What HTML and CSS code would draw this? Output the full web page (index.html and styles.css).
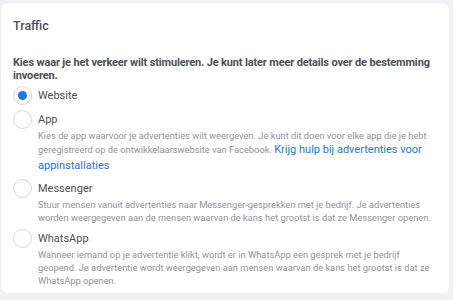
FILE: index.html
```html
<!DOCTYPE html>
<html lang="nl">
<head>
    <meta charset="UTF-8">
    <title>Traffic</title>
    <link rel="stylesheet" href="styles.css">
</head>
<body>
    <div class="card">
        <h2 class="title">Traffic</h2>
        <p class="intro">Kies waar je het verkeer wilt stimuleren. Je kunt later meer details over de bestemming invoeren.</p>
        <ul class="options">
            <li class="option">
                <span class="radio checked"></span>
                <div class="option-body">
                    <div class="option-label">Website</div>
                </div>
            </li>
            <li class="option">
                <span class="radio"></span>
                <div class="option-body">
                    <div class="option-label">App</div>
                    <p class="option-desc">Kies de app waarvoor je advertenties wilt weergeven. Je kunt dit doen voor elke app die je hebt geregistreerd op de ontwikkelaarswebsite van Facebook. <a href="#">Krijg hulp bij advertenties voor appinstallaties</a></p>
                </div>
            </li>
            <li class="option">
                <span class="radio"></span>
                <div class="option-body">
                    <div class="option-label">Messenger</div>
                    <p class="option-desc">Stuur mensen vanuit advertenties naar Messenger-gesprekken met je bedrijf. Je advertenties worden weergegeven aan de mensen waarvan de kans het grootst is dat ze Messenger openen.</p>
                </div>
            </li>
            <li class="option">
                <span class="radio"></span>
                <div class="option-body">
                    <div class="option-label">WhatsApp</div>
                    <p class="option-desc">Wanneer iemand op je advertentie klikt, wordt er in WhatsApp een gesprek met je bedrijf geopend. Je advertentie wordt weergegeven aan mensen waarvan de kans het grootst is dat ze WhatsApp openen.</p>
                </div>
            </li>
        </ul>
    </div>
</body>
</html>
```

FILE: styles.css
```css
body {
    margin: 0;
    padding: 3px 4px 7px 1px;
    background: #f0f1f3;
    font-family: Roboto, "Liberation Sans", sans-serif;
}

.card {
    background: #fff;
    border-radius: 6px;
    padding: 16px 11px 12px 12px;
    height: 290px;
    box-sizing: border-box;
    box-shadow: 0 0 0 1px #eceef0;
}

.title {
    margin: 0;
    font-size: 12.5px;
    font-weight: 500;
    line-height: 14px;
    color: #4b4f56;
}

.intro {
    margin: 23px 0 4px 0;
    font-size: 11px;
    font-weight: 700;
    line-height: 13px;
    letter-spacing: -0.15px;
    color: #4b4f56;
}

.options {
    list-style: none;
    margin: 0;
    padding: 0;
    display: flex;
    flex-direction: column;
    gap: 5px;
}

.option {
    display: flex;
    gap: 6px;
}

.radio {
    flex: none;
    width: 17px;
    height: 17px;
    border: 1px solid #d6d9dd;
    border-radius: 50%;
    display: flex;
    align-items: center;
    justify-content: center;
}

.radio.checked::after {
    content: "";
    width: 9px;
    height: 9px;
    border-radius: 50%;
    background: #1877f2;
}

.option-body {
    flex: 1;
}

.option-label {
    font-size: 11px;
    line-height: 19px;
    color: #4b4f56;
}

.option-desc {
    margin: 0;
    font-size: 9.3px;
    line-height: 13px;
    color: #90949c;
}

.option-desc a {
    color: #1877f2;
    font-size: 11px;
    line-height: 16px;
    text-decoration: none;
}
```
